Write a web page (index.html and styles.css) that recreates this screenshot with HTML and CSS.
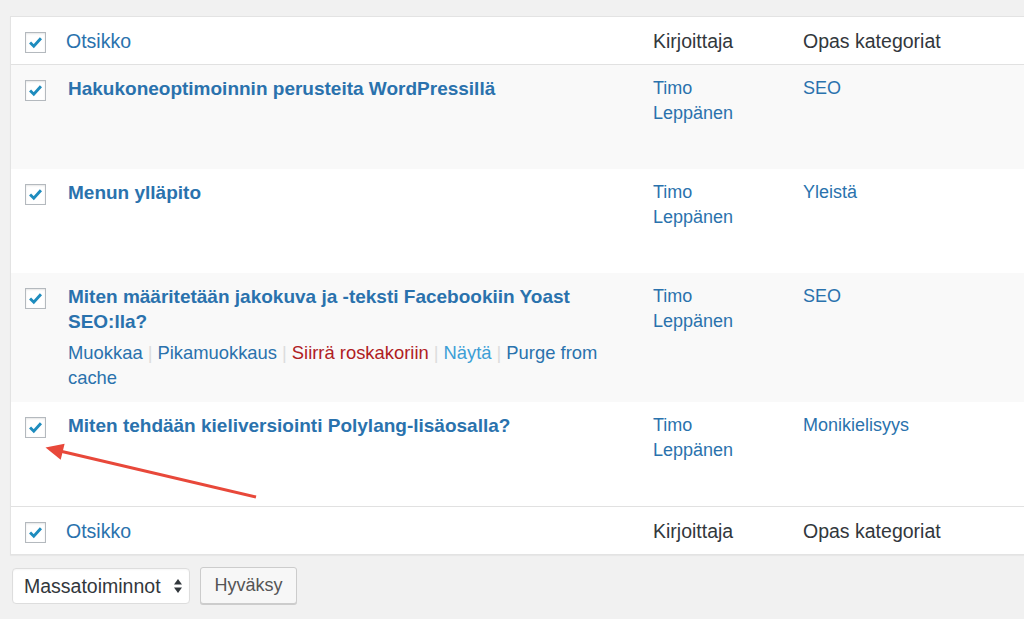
FILE: index.html
```html
<!DOCTYPE html>
<html lang="fi">
<head>
<meta charset="utf-8">
<title>Oppaat</title>
<link rel="stylesheet" href="styles.css">
</head>
<body>
<div class="page">
  <table class="list-table">
    <colgroup>
      <col class="c-check">
      <col class="c-title">
      <col class="c-author">
      <col class="c-cat">
    </colgroup>
    <thead>
      <tr>
        <th class="check-col"><span class="cb"><svg viewBox="0 0 21 21"><path d="M4.5 10.5 L8.6 14.6 L16.5 5.8"/></svg></span></th>
        <th class="title-col"><a href="#">Otsikko</a></th>
        <th>Kirjoittaja</th>
        <th>Opas kategoriat</th>
      </tr>
    </thead>
    <tbody>
      <tr class="alt">
        <th class="check-col"><span class="cb"><svg viewBox="0 0 21 21"><path d="M4.5 10.5 L8.6 14.6 L16.5 5.8"/></svg></span></th>
        <td class="title-cell"><a class="row-title" href="#">Hakukoneoptimoinnin perusteita WordPressillä</a>
          <div class="row-actions"><a href="#">Muokkaa</a><span class="sep">|</span><a href="#">Pikamuokkaus</a><span class="sep">|</span><a class="trash" href="#">Siirrä roskakoriin</a><span class="sep">|</span><a class="view" href="#">Näytä</a><span class="sep">|</span><a href="#">Purge from cache</a></div>
        </td>
        <td class="author"><a href="#">Timo Leppänen</a></td>
        <td><a href="#">SEO</a></td>
      </tr>
      <tr>
        <th class="check-col"><span class="cb"><svg viewBox="0 0 21 21"><path d="M4.5 10.5 L8.6 14.6 L16.5 5.8"/></svg></span></th>
        <td class="title-cell"><a class="row-title" href="#">Menun ylläpito</a>
          <div class="row-actions"><a href="#">Muokkaa</a><span class="sep">|</span><a href="#">Pikamuokkaus</a><span class="sep">|</span><a class="trash" href="#">Siirrä roskakoriin</a><span class="sep">|</span><a class="view" href="#">Näytä</a><span class="sep">|</span><a href="#">Purge from cache</a></div>
        </td>
        <td class="author"><a href="#">Timo Leppänen</a></td>
        <td><a href="#">Yleistä</a></td>
      </tr>
      <tr class="alt">
        <th class="check-col"><span class="cb"><svg viewBox="0 0 21 21"><path d="M4.5 10.5 L8.6 14.6 L16.5 5.8"/></svg></span></th>
        <td class="title-cell"><a class="row-title" href="#">Miten määritetään jakokuva ja -teksti Facebookiin Yoast SEO:lla?</a>
          <div class="row-actions is-visible"><a href="#">Muokkaa</a><span class="sep">|</span><a href="#">Pikamuokkaus</a><span class="sep">|</span><a class="trash" href="#">Siirrä roskakoriin</a><span class="sep">|</span><a class="view" href="#">Näytä</a><span class="sep">|</span><a href="#">Purge from cache</a></div>
        </td>
        <td class="author"><a href="#">Timo Leppänen</a></td>
        <td><a href="#">SEO</a></td>
      </tr>
      <tr>
        <th class="check-col"><span class="cb"><svg viewBox="0 0 21 21"><path d="M4.5 10.5 L8.6 14.6 L16.5 5.8"/></svg></span></th>
        <td class="title-cell"><a class="row-title" href="#">Miten tehdään kieliversiointi Polylang-lisäosalla?</a>
          <div class="row-actions"><a href="#">Muokkaa</a><span class="sep">|</span><a href="#">Pikamuokkaus</a><span class="sep">|</span><a class="trash" href="#">Siirrä roskakoriin</a><span class="sep">|</span><a class="view" href="#">Näytä</a><span class="sep">|</span><a href="#">Purge from cache</a></div>
        </td>
        <td class="author"><a href="#">Timo Leppänen</a></td>
        <td><a href="#">Monikielisyys</a></td>
      </tr>
    </tbody>
    <tfoot>
      <tr>
        <th class="check-col"><span class="cb"><svg viewBox="0 0 21 21"><path d="M4.5 10.5 L8.6 14.6 L16.5 5.8"/></svg></span></th>
        <th class="title-col"><a href="#">Otsikko</a></th>
        <th>Kirjoittaja</th>
        <th>Opas kategoriat</th>
      </tr>
    </tfoot>
  </table>

  <div class="bulk">
    <div class="select">
      <span>Massatoiminnot</span>
      <svg class="updown" viewBox="0 0 10 16"><path d="M5 1 L9 6.5 H1 Z"/><path d="M5 15 L9 9.5 H1 Z"/></svg>
    </div>
    <button class="button" type="button">Hyväksy</button>
  </div>
</div>

<svg class="annotation" viewBox="0 0 1024 619" width="1024" height="619">
  <line x1="256" y1="497" x2="62" y2="451.5"/>
  <polygon points="45.5,447.5 64.6,443.8 60.7,459.8"/>
</svg>
</body>
</html>
```

FILE: styles.css
```css
html, body {
  margin: 0;
  padding: 0;
}

body {
  background: #f1f1f1;
  font-family: "Liberation Sans", Arial, Helvetica, sans-serif;
  color: #32373c;
  font-size: 18px;
  overflow: hidden;
  width: 1024px;
  height: 619px;
  position: relative;
}

a {
  text-decoration: none;
  color: #2a72ad;
}

.page {
  padding: 16px 0 0 10px;
}

.list-table {
  width: 1032px;
  table-layout: fixed;
  border-collapse: separate;
  border-spacing: 0;
  background: #fff;
  border: 1px solid #e3e3e3;
  border-right: 0;
  box-shadow: 0 1px 1px rgba(0, 0, 0, 0.04);
}

.c-check { width: 47px; }
.c-title { width: 585px; }
.c-author { width: 150px; }

.list-table thead th,
.list-table tfoot th {
  font-weight: normal;
  text-align: left;
  font-size: 19.5px;
  line-height: 25px;
  padding: 12px 10px 10px;
  color: #32373c;
  vertical-align: top;
}

.list-table thead th {
  border-bottom: 1px solid #e1e1e1;
}

.list-table tfoot th {
  border-top: 1px solid #e1e1e1;
}

.list-table thead th.title-col,
.list-table tfoot th.title-col {
  padding-left: 8px;
}

.list-table th.check-col {
  padding: 15px 0 0 14px;
  vertical-align: top;
}

.list-table tbody td {
  padding: 11px 10px 12px;
  line-height: 25px;
  vertical-align: top;
  font-size: 18px;
}

.list-table tbody tr.alt {
  background: #f9f9f9;
}

.list-table td.author {
  padding-right: 26px;
}

.cb {
  display: block;
  width: 19px;
  height: 19px;
  border: 1px solid #b4b9be;
  background: #fff;
  box-shadow: inset 0 1px 2px rgba(0, 0, 0, 0.1);
}

.cb svg {
  display: block;
  width: 19px;
  height: 19px;
}

.cb path {
  fill: none;
  stroke: #1e8cbe;
  stroke-width: 3.2;
  stroke-linecap: butt;
  stroke-linejoin: miter;
}

.row-title {
  font-weight: bold;
  font-size: 19px;
  display: block;
}

.row-actions {
  padding-top: 6px;
  font-size: 18.4px;
  visibility: hidden;
}

.row-actions.is-visible {
  visibility: visible;
}

.row-actions .sep {
  color: #dddddd;
  margin: 0 5px;
}

.row-actions .trash {
  color: #b0201f;
}

.row-actions .view {
  color: #3d9fd6;
}

.bulk {
  display: flex;
  align-items: flex-start;
  gap: 10px;
  margin-top: 13px;
  padding-left: 2px;
}

.select {
  box-sizing: border-box;
  width: 178px;
  height: 36px;
  display: flex;
  align-items: center;
  justify-content: space-between;
  padding: 0 6px 0 11px;
  background: #fff;
  border: 1px solid #dddddd;
  border-radius: 4px;
  box-shadow: inset 0 1px 2px rgba(0, 0, 0, 0.04);
  font-size: 19.5px;
  color: #32373c;
}

.updown {
  width: 10px;
  height: 16px;
}

.updown path {
  fill: #32373c;
}

.button {
  box-sizing: border-box;
  width: 97px;
  height: 37px;
  margin-top: -1px;
  background: #f7f7f7;
  border: 1px solid #cccccc;
  border-radius: 3px;
  box-shadow: 0 1px 0 #cccccc;
  font-family: "Liberation Sans", Arial, Helvetica, sans-serif;
  font-size: 18px;
  color: #555555;
  padding: 0;
}

.annotation {
  position: absolute;
  left: 0;
  top: 0;
  pointer-events: none;
}

.annotation line {
  stroke: #e8483a;
  stroke-width: 3;
}

.annotation polygon {
  fill: #e8483a;
}
```
